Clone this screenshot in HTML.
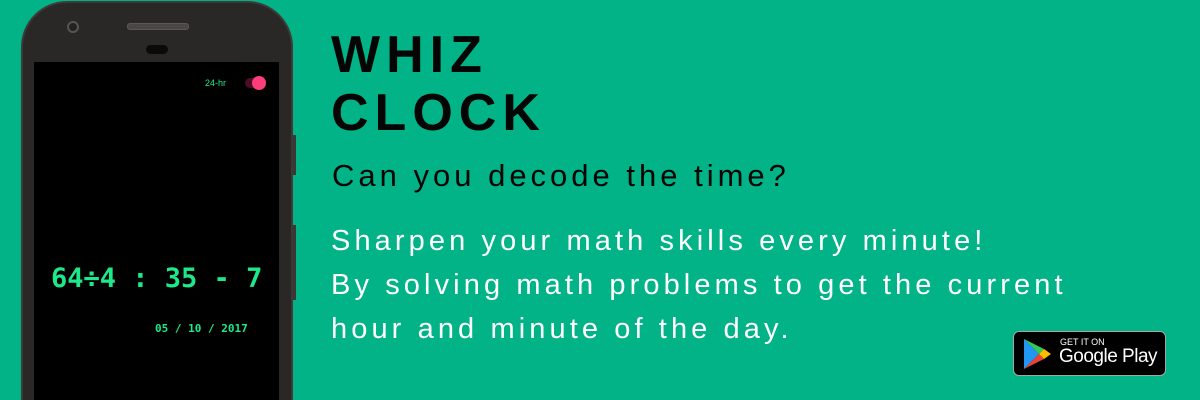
<!DOCTYPE html>
<html style="height:400px;overflow:hidden"><head><style>
body{margin:0;width:1200px;height:400px;background:#01b386;position:relative;overflow:hidden;font-family:"Liberation Sans",sans-serif}
.ph{position:absolute;left:21px;top:1px;width:272px;height:399px;background:#2a2827;border-radius:46px 46px 0 0;border:2px solid #3d3a38;border-bottom:none;box-sizing:border-box}
.scr{position:absolute;left:34px;top:62px;width:245px;height:338px;background:#000}
.t{position:absolute;white-space:nowrap}
.g{color:#1de98b;font-weight:bold;font-family:"DejaVu Sans Mono","Liberation Mono",monospace}
</style></head><body>
<div class="ph"></div>
<div style="position:absolute;left:293px;top:135px;width:3px;height:40px;background:#3a3735"></div>
<div style="position:absolute;left:293px;top:225px;width:3px;height:75px;background:#3a3735"></div>
<div style="position:absolute;left:67px;top:21px;width:8px;height:8px;border-radius:50%;border:2px solid #555;background:#222"></div>
<div style="position:absolute;left:127px;top:23px;width:60px;height:5px;border-radius:3px;background:#4a4746;border:1px solid #5a5756"></div>
<div style="position:absolute;left:146px;top:45px;width:22px;height:9px;border-radius:5px;background:#0a0a0a"></div>
<div class="scr"></div>
<div class="t" style="left:205px;top:78px;font-size:9px;color:#1de98b">24-hr</div>
<div style="position:absolute;left:245px;top:78px;width:18px;height:10px;border-radius:5px;background:#4a0d25"></div>
<div style="position:absolute;left:252px;top:76px;width:14px;height:14px;border-radius:50%;background:#ff3d7a"></div>
<div class="t g" style="left:51px;top:263px;font-size:27px;letter-spacing:0">64÷4 : 35 - 7</div>
<div class="t g" style="left:155px;top:322px;font-size:11px;letter-spacing:0">05 / 10 / 2017</div>
<div class="t" style="left:331px;top:26px;font-size:52px;font-weight:bold;letter-spacing:6px;line-height:58px;color:#050505">WHIZ<br>CLOCK</div>
<div class="t" style="left:332px;top:158px;font-size:31px;letter-spacing:4px;color:#050505">Can you decode the time?</div>
<div class="t" style="left:331px;top:219px;font-size:29px;letter-spacing:4.1px;line-height:44px;color:#fff">Sharpen your math skills every minute!<br>By solving math problems to get the current<br>hour and minute of the day.</div>
<div style="position:absolute;left:1013px;top:331px;width:153px;height:45px;background:#000;border:1px solid #a6a6a6;border-radius:6px;box-sizing:border-box"></div>
<svg style="position:absolute;left:1023px;top:338px" width="30" height="32" viewBox="0 0 30 32">
<path d="M1 1 L16 16 L1 31 Z" fill="#2196f3"/><path d="M1 1 L21 11 L16 16 Z" fill="#34c759"/><path d="M1 31 L16 16 L21 21 Z" fill="#ea4335"/><path d="M21 11 L28 16 L21 21 L16 16 Z" fill="#fbbc04"/></svg>
<div class="t" style="left:1060px;top:337px;font-size:9px;color:#fff">GET IT ON</div>
<div class="t" style="left:1059px;top:346px;font-size:19px;color:#fff;letter-spacing:-0.5px">Google Play</div>
</body></html>
